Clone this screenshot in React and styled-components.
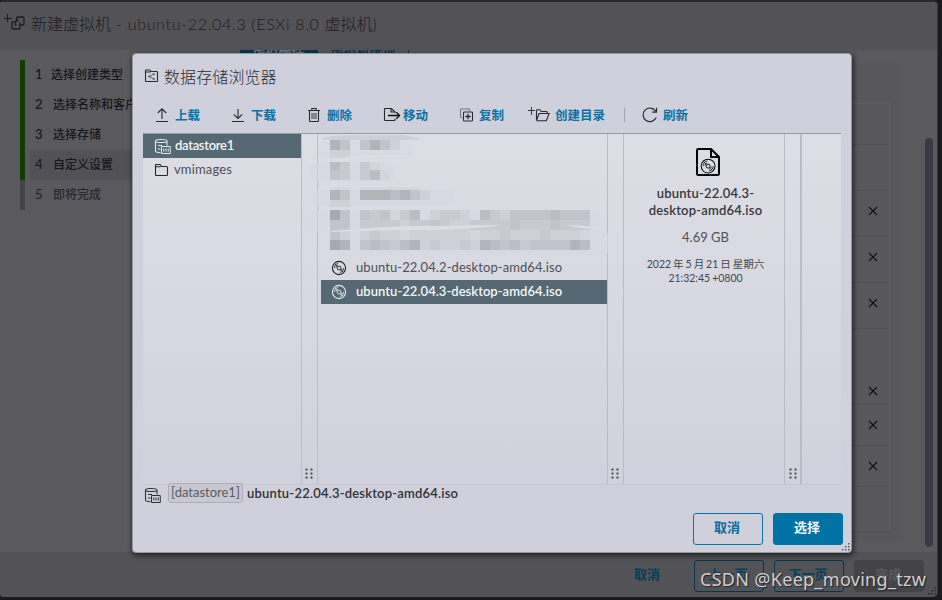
import styled, {createGlobalStyle, css} from "styled-components";

const GlobalStyle = createGlobalStyle`
  * {
    box-sizing: border-box;
  }

  body {
    margin: 0;
    overflow: hidden;
    background-color: #1b1a1c;
    font-family: Lato, "Noto Sans CJK SC", sans-serif;
    font-size: 13px;
    color: #303036;
  }
`

const steps = [
    {title: "选择创建类型", state: "done", indent: 10},
    {title: "选择名称和客户机操作系统", state: "done", indent: 12},
    {title: "选择存储", state: "done", indent: 12},
    {title: "自定义设置", state: "current", indent: 12},
    {title: "即将完成", state: "next", indent: 12},
]

const hardwareRows = [
    {height: 41},
    {height: 46},
    {height: 46, removable: true, lift: 5},
    {height: 46, removable: true, lift: 5},
    {height: 46, removable: true, lift: 5},
    {height: 76, removable: true, bottom: true, lift: 7},
    {height: 41, removable: true},
    {height: 41, removable: true},
    {height: 45},
]

// each row: height and 26 cells, "." is empty, letters go from dark to light
const mosaicRows = [
    [10, "bd.dbdf"],
    [8, "ff"],
    [4, ""],
    [8, "ce.eg"],
    [10, "de.ecg"],
    [7, ""],
    [3, "gg.gggggg"],
    [10, "bd.bbbcbdf"],
    [7, "ff"],
    [3, ""],
    [10, "ad.dedgec.feef.cefddddcddde"],
    [10, "dd.eeeefeedeffeeeedeeedeeef"],
    [10, "df.feffgffffffgffefffefffg"],
    [10, "ab.dcdecbfeffefbcdceddddbce"],
].map(([height, cells]) => ({height, cells: cells.slice(0, 26).padEnd(26, ".")}))

const mosaicColors = {
    a: "#a8a8b2",
    b: "#b3b3ba",
    c: "#bcbcc5",
    d: "#c3c3cb",
    e: "#c9c9d1",
    f: "#d0d0d8",
    g: "#d5d5dd",
}

const Screen = styled.div`
  position: relative;
  width: 942px;
  height: 600px;
  overflow: hidden;
`

const Wizard = styled.div`
  display: flex;
  flex-direction: column;
  width: 938px;
  height: 597px;
  border-top: 2px solid #29282a;
  border-right: 1px solid #38383a;
  border-radius: 3px 5px 5px 4px;
  background-color: #5a595e;
  overflow: hidden;
`

const WizardHeader = styled.div`
  display: flex;
  align-items: center;
  gap: 6px;
  flex: none;
  height: 48px;
  padding: 0 0 6px 4px;
  background-color: #535257;
  color: #1d1c20;
`

const WizardTitle = styled.h1`
  margin: 0;
  font-size: 16px;
  font-weight: 300;
  white-space: nowrap;

  span {
    letter-spacing: 0.68px;
  }
`

const WizardBody = styled.div`
  display: flex;
  flex: 1;
  min-height: 0;
`

const StepList = styled.div`
  flex: none;
  width: 220px;
  padding: 10px 0 0 20px;
`

const Step = styled.div`
  display: flex;
  align-items: center;
  height: 30px;
  padding-left: 5px;
  border-left: 5px solid ${({$state}) => $state === "next" ? "#444347" : "#143b02"};
  font-size: 12px;
  font-weight: 500;
  white-space: nowrap;
  color: ${({$state}) => $state === "next" ? "#29282c" : "#17161a"};

  div {
    display: flex;
    align-items: center;
    gap: ${({$indent}) => $indent - 2}px;
    width: 180px;
    height: 30px;
    padding: 0 0 3px 5px;
    border-radius: 3px;
    background-color: ${({$state}) => $state === "current" ? "#525156" : "transparent"};
  }

  span {
    width: 8px;
    font-size: 13px;
  }
`

const WizardContent = styled.div`
  flex: 1;
  padding-left: 20px;
`

const TabBar = styled.div`
  display: flex;
  height: 13px;
  overflow: hidden;
`

const Tab = styled.div`
  display: flex;
  align-items: flex-end;
  justify-content: center;
  flex: none;
  width: ${({$active}) => $active ? 78 : 91}px;
  height: 5px;
  font-size: 13px;
  font-weight: 700;
  line-height: 8px;
  border-right: 1px solid #06384f;
  background-color: ${({$active}) => $active ? "#06384f" : "transparent"};
  color: ${({$active}) => $active ? "#737982" : "#06384f"};
`

const HardwarePanel = styled.div`
  width: 660px;
  height: 479px;
  padding: 40px 10px 0 0;
  background-color: #58585c;
`

const HardwareTable = styled.div`
  border: 1px solid #5e5e61;
  border-bottom-color: #525156;
`

const HardwareRow = styled.div`
  display: flex;
  justify-content: flex-end;
  align-items: ${({$bottom}) => $bottom ? "flex-end" : "center"};
  height: ${({$height}) => $height}px;
  padding: 0 10px ${({$lift}) => $lift || 0}px 0;
  border-bottom: 1px solid #525156;

  &:last-child {
    height: 44px;
    border-bottom: none;
  }
`

const ScrollTrack = styled.div`
  flex: none;
  width: 12px;
  padding-top: 88px;
`

const ScrollThumb = styled.div`
  width: 8px;
  height: 409px;
  border-radius: 4px;
  background-color: #3a3943;
`

const WizardFooter = styled.div`
  display: flex;
  justify-content: flex-end;
  align-items: flex-start;
  gap: 10px;
  flex: none;
  height: 45px;
  padding: 8px 13px 0 0;
  background-color: #535257;
`

const buttonKinds = {
    link: css`
      border-color: transparent;
      color: #063f57;
      width: 72px;
    `,
    dimOutline: css`
      border-color: #0b3549;
      color: #063f57;
    `,
    disabled: css`
      border-color: #444347;
      background-color: #444347;
      color: #5a595d;
    `,
    outline: css`
      border-color: #0b74a6;
      color: #0b6b99;
    `,
    primary: css`
      border-color: #0072a3;
      background-color: #0072a3;
      color: #f1f8fa;
    `,
}

const Button = styled.button`
  width: 70px;
  height: 32px;
  padding: 0 2px 5px 0;
  border: 1px solid;
  border-radius: 3px;
  background-color: transparent;
  font-family: inherit;
  font-size: 13px;
  font-weight: 700;
  ${({$kind}) => buttonKinds[$kind]}
`

const Modal = styled.div`
  position: absolute;
  left: 132px;
  top: 53px;
  display: flex;
  flex-direction: column;
  width: 720px;
  height: 500px;
  padding: 0 10px;
  border: 1px solid #97979f;
  border-radius: 4px;
  background-color: #d0d0dd;
  box-shadow: 1px 2px 5px 1px rgba(20, 20, 24, 0.7);
`

const ModalTitle = styled.h2`
  display: flex;
  align-items: center;
  gap: 5px;
  height: 46px;
  margin: 0;
  padding: 0 0 3px 1px;
  font-size: 16px;
  font-weight: 300;
  letter-spacing: 0.1px;
  color: #2c2c31;
`

const Toolbar = styled.div`
  display: flex;
  align-items: center;
  height: 33px;
  padding: 0 0 4px 12px;
`

const ToolButton = styled.div`
  display: flex;
  align-items: center;
  justify-content: space-between;
  width: ${({$width}) => $width}px;
  margin-right: ${({$after}) => $after}px;
  font-size: 12.5px;
  font-weight: 700;
  white-space: nowrap;
  color: #0b71a1;

  svg {
    color: #29292e;
  }
`

const ToolDivider = styled.div`
  width: 1px;
  height: 14px;
  margin-right: 17px;
  background-color: #a3a3ae;
`

const Browser = styled.div`
  display: flex;
  flex: none;
  height: 352px;
  border-top: 1px solid #9898a1;
  border-bottom: 1px solid #c5c5cf;
  background: linear-gradient(#dddde5, #d8d8e2 50%, #d1d1dd);
`

const Column = styled.div`
  flex: none;
  width: ${({$width}) => $width}px;
  padding-left: ${({$inset}) => $inset || 0}px;
`

const Gutter = styled.div`
  display: flex;
  align-items: flex-end;
  justify-content: center;
  flex: none;
  width: ${({$wide}) => $wide ? 18 : 17}px;
  padding: 0 ${({$wide}) => $wide ? 0 : 2}px 5px 0;
  border-left: 1px solid #bcbcc6;
  border-right: ${({$wide}) => $wide ? 2 : 1}px solid #bcbcc6;
`

const Entry = styled.div`
  display: flex;
  align-items: center;
  height: 24px;
  padding-left: ${({$file}) => $file ? 10 : 11}px;
  gap: ${({$file}) => $file ? 9 : 4}px;
  font-size: 13px;
  line-height: 20px;
  letter-spacing: ${({$spacing}) => $spacing || 0}px;
  white-space: nowrap;
  background-color: ${({$selected}) => $selected ? "#556873" : "transparent"};
  color: ${({$selected}) => $selected ? "#f4f6f8" : "#505056"};
  font-weight: ${({$selected}) => $selected ? 600 : 400};

  svg {
    color: ${({$selected}) => $selected ? "#e4e9ec" : "#242428"};
  }

  span {
    padding-bottom: 2px;
  }
`

const HiddenFiles = styled.div`
  position: relative;
  height: 122px;
  padding: 6px 0 0 9px;
`

const Smears = styled.svg`
  position: absolute;
  left: -12px;
  top: 0;
  pointer-events: none;
`

const MosaicRow = styled.div`
  position: relative;
  display: grid;
  grid-template-columns: repeat(26, 10px);
  height: ${({$height}) => $height}px;
`

const MosaicCell = styled.div`
  background-color: ${({$color}) => $color || "transparent"};
`

const Details = styled.div`
  display: flex;
  flex-direction: column;
  align-items: center;
  padding: 14px 0 0 3px;
  text-align: center;
  white-space: nowrap;

  svg {
    margin-left: 5px;
  }
`

const DetailsName = styled.div`
  margin-top: 9px;
  font-size: 13px;
  font-weight: 600;
  line-height: 17px;
  letter-spacing: 0.2px;
  color: #37373c;
`

const DetailsSize = styled.div`
  margin-top: 10px;
  font-size: 13px;
  line-height: 17px;
  color: #505056;
`

const DetailsDate = styled.div`
  margin-top: 11px;
  font-size: 10.5px;
  line-height: 14px;
  word-spacing: -0.7px;
  color: #45454b;
`

const PathBar = styled.div`
  display: flex;
  align-items: flex-start;
  height: 28px;
  margin-top: -2px;

  svg {
    margin: 4px 0 0 1px;
  }
`

const PathTag = styled.div`
  width: 75px;
  height: 20px;
  margin: 0 4px 0 7px;
  border: 1px solid #adadb8;
  border-radius: 3px;
  background-color: #c8c8d3;
  font-size: 13px;
  line-height: 17px;
  text-align: center;
  color: #5b5b62;
`

const PathFile = styled.div`
  font-size: 13px;
  font-weight: 600;
  line-height: 20px;
  letter-spacing: 0.2px;
`

const ModalFooter = styled.div`
  display: flex;
  justify-content: flex-end;
  gap: 10px;
  margin: 2px -2px 0 0;
`

const ResizeGrip = styled.svg`
  position: absolute;
  right: ${({$right}) => $right}px;
  bottom: ${({$bottom}) => $bottom}px;
`

const Watermark = styled.div`
  position: absolute;
  left: 700px;
  top: 567px;
  font-family: "Noto Sans", sans-serif;
  font-size: 18px;
  line-height: 24px;
  letter-spacing: 0.3px;
  white-space: nowrap;
  color: #cfcfd1;
  text-shadow: 1px 1px 1px #222;
`

const Svg = ({w = 16, h = 16, children}) => (
    <svg width={w} height={h} viewBox={`0 0 ${w} ${h}`} fill="none" stroke="currentColor" strokeWidth="1.1">
        {children}
    </svg>
)

const NewVmIcon = () => (
    <Svg w={21} h={18}>
        <path d="M0 4.5h8M3.5 0v8"/>
        <path d="M12.5 6V4.2q0-1.2 1.2-1.2h5q1.3 0 1.3 1.2v5.5q0 1.3-1.3 1.3h-3.2M16 8.500v5.300q0 1.200-1.200 1.200H9.200Q8 15 8 13.800V9.200Q8 8 9.200 8h1.300M12.500 11h-1V8q0-1.500 1.500-1.500h1.500" strokeWidth="1.3"/>
    </Svg>
)

const BrowserIcon = () => (
    <Svg w={15}>
        <path d="M1.5 3.5v9.2q0 .8.8.8h10.4q.8 0 .8-.8V4.3q0-.8-.8-.8H7L5.8 2H2.3q-.8 0-.8.8zM1.5 4h5"/>
        <path d="M10 6 5 8.5l5 2.5" strokeWidth=".7"/>
        <path d="M9.4 5.6h1v1h-1zM4.5 8h1v1h-1zM9.4 10.5h1v1h-1z" strokeWidth=".5"/>
    </Svg>
)

const UploadIcon = () => <Svg w={14}><path d="M1 14.500h12M7 12V2M2.800 6 7 1.800 11.200 6"/></Svg>

const DownloadIcon = () => <Svg w={14}><path d="M1 14.500h12M7 2v9.500M2.800 7.300 7 11.500l4.200-4.200"/></Svg>

const TrashIcon = () => (
    <Svg w={14}>
        <path d="M1 3.5h12M2.500 3.500v10q0 1 1 1h7q1 0 1-1v-10M4.800 3.500v-2h4.400v2"/>
        <path d="M5 6v6M7 6v6M9 6v6" strokeWidth=".9"/>
    </Svg>
)

const MoveIcon = () => (
    <Svg w={18}>
        <path d="M12 6V5L8.500 1.500H2.300q-.8 0-.8.8v10.400q0 .8.800.8h9q.7 0 .7-.8V11.500M8 1.500V5h4"/>
        <path d="M5 8.500h11.500M13.300 5.200l3.300 3.300-3.300 3.300" strokeWidth="1.3" stroke="#111"/>
    </Svg>
)

const CopyIcon = () => (
    <Svg w={15}>
        <path d="M3.500 10.500H2.400q-.9 0-.9-.9V2.900q0-.9.9-.9h7.200q.9 0 .9.900V4" stroke="#77777f"/>
        <rect x="4.500" y="5" width="9" height="9" rx=".8"/>
        <path d="M9 6.800v5.400M6.300 9.500h5.400" strokeWidth="1.3"/>
    </Svg>
)

const NewFolderIcon = () => (
    <Svg w={22}>
        <path d="M0 3.500h7M3.500 0v8" strokeWidth=".9"/>
        <path d="M8.500 13.500v-10q0-.8.800-.8h2.500l1.500 1.800h5q.8 0 .8.800V6.500M8.500 13.800h9.800l2.800-7.300H11l-2.500 7"/>
    </Svg>
)

const RefreshIcon = () => (
    <Svg>
        <path d="M14.200 10.500A6.800 6.800 0 1 1 13.700 4.200M14.500.8v4.400h-4.300" strokeWidth="1.2"/>
    </Svg>
)

const DatastoreIcon = () => (
    <Svg w={17} h={17}>
        <path d="M1.500 3C1.500.9 13 .9 13 3M13 3C13 5 1.500 5 1.500 3v10c0 1 2 1.600 5 1.700M13 3v4.500M4 7.200c1 .3 2.500.4 4 .3M4 10.800c.6.3 1.500.4 2.500.4"/>
        <path d="M7.500 8.500h8.800v7H7.500zM9.800 10.500v3M12 10.500v3M14.200 10.500v3" strokeWidth="1"/>
    </Svg>
)

const FolderIcon = () => (
    <Svg>
        <path d="M1.500 3v9.500q0 1 1 1h10q1 0 1-1v-7q0-1-1-1H7.500L6 2.500H2q-.5 0-.5.5zM1.500 4.800h5"/>
    </Svg>
)

const DiscShape = () => (
    <>
        <circle cx="8" cy="8" r="6.6"/>
        <circle cx="8" cy="8" r="1.9" strokeWidth=".9"/>
        <path d="M3.200 8a4.800 4.800 0 0 1 4-4.700M4.900 7.500a3.300 3.300 0 0 1 2-2.500M12.800 8a4.800 4.800 0 0 1-4 4.700M11.100 8.500a3.300 3.300 0 0 1-2 2.500M4 4l1.800 1.800M10.200 10.200 12 12" strokeWidth=".8"/>
    </>
)

const DiscIcon = () => <Svg><DiscShape/></Svg>

const IsoFileIcon = () => (
    <svg width="24" height="28" viewBox="0 0 24 28" fill="none" stroke="#050507">
        <path d="M15 1H2.200Q1 1 1 2.200v23.600Q1 27 2.200 27h19.600q1.200 0 1.200-1.200V9zM15 1v8h8" strokeWidth="2"/>
        <g transform="translate(3.700 9.700) scale(1.050)">
            <DiscShape/>
        </g>
    </svg>
)

const CloseIcon = () => (
    <svg width="12" height="12" viewBox="0 0 12 12" stroke="#101013" strokeWidth="1.1">
        <path d="M2 2l8 8M10 2l-8 8"/>
    </svg>
)

const DragDots = () => (
    <svg width="8" height="11" viewBox="0 0 8 11" fill="#45454c">
        {[0, 4, 8].map(y => [0, 5].map(x => <rect key={`${x}-${y}`} x={x + 0.5} y={y + 0.5} width="2" height="2" rx=".5"/>))}
    </svg>
)

const Grip = ({right, bottom, color}) => (
    <ResizeGrip $right={right} $bottom={bottom} width="8" height="8" fill={color}>
        <path d="M6 0h1.500v1.500H6zM3 3h1.500v1.500H3zM6 3h1.500v1.500H6zM0 6h1.500v1.500H0zM3 6h1.500v1.500H3zM6 6h1.500v1.500H6z"/>
    </ResizeGrip>
)

const tools = [
    {title: "上载", Icon: UploadIcon, width: 45, after: 31},
    {title: "下载", Icon: DownloadIcon, width: 45, after: 31},
    {title: "删除", Icon: TrashIcon, width: 45, after: 31},
    {title: "移动", Icon: MoveIcon, width: 45, after: 31},
    {title: "复制", Icon: CopyIcon, width: 45, after: 24},
    {title: "创建目录", Icon: NewFolderIcon, width: 77, after: 19},
    {title: "刷新", Icon: RefreshIcon, width: 46, after: 0, divider: true},
]

const NewVmWizard = () => (
    <Wizard>
        <WizardHeader>
            <NewVmIcon/>
            <WizardTitle>新建虚拟机<span> - ubuntu-22.04.3 (ESXi 8.0 </span>虚拟机)</WizardTitle>
        </WizardHeader>
        <WizardBody>
            <StepList>
                {steps.map(({title, state, indent}, index) => (
                    <Step key={title} $state={state} $indent={indent}>
                        <div><span>{index + 1}</span>{title}</div>
                    </Step>
                ))}
            </StepList>
            <WizardContent>
                <TabBar>
                    <Tab $active>虚拟硬件</Tab>
                    <Tab>虚拟机选项</Tab>
                </TabBar>
                <HardwarePanel>
                    <HardwareTable>
                        {hardwareRows.map(({height, removable, bottom, lift}, index) => (
                            <HardwareRow key={index} $height={height} $bottom={bottom} $lift={lift}>
                                {removable && <CloseIcon/>}
                            </HardwareRow>
                        ))}
                    </HardwareTable>
                </HardwarePanel>
            </WizardContent>
            <ScrollTrack>
                <ScrollThumb/>
            </ScrollTrack>
        </WizardBody>
        <WizardFooter>
            <Button $kind="link">取消</Button>
            <Button $kind="dimOutline">上一页</Button>
            <Button $kind="dimOutline">下一页</Button>
            <Button $kind="disabled">完成</Button>
        </WizardFooter>
    </Wizard>
)

const FileMosaic = () => (
    <HiddenFiles>
        <Smears width="312" height="122">
            <g fill="#d6dae2" opacity=".65">
                <path d="M14 4Q20 1 50 1h40q14 0 22 5H14z" fill="#c9c9d3"/>
                <rect x="9" y="8" width="95" height="17" rx="8"/>
                <rect x="0" y="28" width="86" height="20" rx="10"/>
                <rect x="3" y="55" width="142" height="18" rx="9"/>
                <rect x="0" y="76" width="292" height="22" rx="9"/>
                <rect x="20" y="97" width="280" height="24" rx="6"/>
            </g>
        </Smears>
        {mosaicRows.map(({height, cells}, row) => (
            <MosaicRow key={row} $height={height}>
                {[...cells].map((cell, i) => <MosaicCell key={i} $color={mosaicColors[cell]}/>)}
            </MosaicRow>
        ))}
        <Smears width="312" height="122">
            <path d="M22 97Q90 91 140 92Q170 91 194 91Q160 96 110 96T22 98zM257 91q20 0 34 4q-20 0-34-4z" fill="#dcdee4"/>
            <path d="M20 26Q50 20 105 21Q60 24 20 27z" fill="#dcdee4"/>
        </Smears>
    </HiddenFiles>
)

const DatastoreBrowser = () => (
    <Modal>
        <ModalTitle><BrowserIcon/>数据存储浏览器</ModalTitle>
        <Toolbar>
            {tools.map(({title, Icon, width, after, divider}) => [
                divider && <ToolDivider key="divider"/>,
                <ToolButton key={title} $width={width} $after={after}><Icon/>{title}</ToolButton>,
            ])}
        </Toolbar>
        <Browser>
            <Column $width={158}>
                <Entry $selected $spacing={-0.3}><DatastoreIcon/><span>datastore1</span></Entry>
                <Entry $spacing={0.15}><FolderIcon/><span>vmimages</span></Entry>
            </Column>
            <Gutter><DragDots/></Gutter>
            <Column $width={289} $inset={3}>
                <FileMosaic/>
                <Entry $file $spacing={0.08}><DiscIcon/><span>ubuntu-22.04.2-desktop-amd64.iso</span></Entry>
                <Entry $file $selected $spacing={0.04}><DiscIcon/><span>ubuntu-22.04.3-desktop-amd64.iso</span></Entry>
            </Column>
            <Gutter><DragDots/></Gutter>
            <Column $width={160}>
                <Details>
                    <IsoFileIcon/>
                    <DetailsName>ubuntu-22.04.3-<br/>desktop-amd64.iso</DetailsName>
                    <DetailsSize>4.69 GB</DetailsSize>
                    <DetailsDate>2022 年 5 月 21 日 星期六<br/>21:32:45 +0800</DetailsDate>
                </Details>
            </Column>
            <Gutter $wide><DragDots/></Gutter>
        </Browser>
        <PathBar>
            <DatastoreIcon/>
            <PathTag>[datastore1]</PathTag>
            <PathFile>ubuntu-22.04.3-desktop-amd64.iso</PathFile>
        </PathBar>
        <ModalFooter>
            <Button $kind="outline">取消</Button>
            <Button $kind="primary">选择</Button>
        </ModalFooter>
        <Grip right={1} bottom={1} color="#55555e"/>
    </Modal>
)

const App = () => (
    <Screen>
        <GlobalStyle/>
        <NewVmWizard/>
        <DatastoreBrowser/>
        <Grip right={6} bottom={5} color="#28272b"/>
        <Watermark>CSDN @Keep_moving_tzw</Watermark>
    </Screen>
)

export default App
